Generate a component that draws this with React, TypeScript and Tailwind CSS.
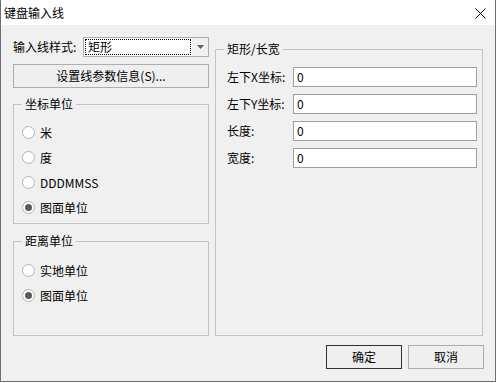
const font = { fontFamily: '"Noto Sans CJK SC", "Noto Sans", sans-serif' }

const coordUnits = [
  { label: '米', checked: false },
  { label: '度', checked: false },
  { label: 'DDDMMSS', checked: false },
  { label: '图面单位', checked: true },
]

const distUnits = [
  { label: '实地单位', checked: false },
  { label: '图面单位', checked: true },
]

const fields = ['左下X坐标:', '左下Y坐标:', '长度:', '宽度:']

function Radio({ label, checked }: { label: string; checked: boolean }) {
  return (
    <div className="flex h-[25px] items-center">
      <span className="flex h-[13px] w-[13px] items-center justify-center rounded-full border border-[#b4b4b4] bg-white">
        {checked && <span className="h-[7px] w-[7px] rounded-full bg-[#5a5a5a]" />}
      </span>
      <span className="ml-[5px] text-[12px] leading-none text-black">{label}</span>
    </div>
  )
}

function Group({
  title,
  className,
  children,
}: {
  title: string
  className: string
  children: React.ReactNode
}) {
  return (
    <div className={`relative border border-[#c4c4c4] ${className}`}>
      {/* legend sits over the top border */}
      <span className="absolute top-[-9px] left-[8px] bg-[#f0f0f0] px-[3px] text-[12px] leading-[16px] text-black">
        {title}
      </span>
      {children}
    </div>
  )
}

export default function App() {
  return (
    <div className="h-[383px] w-[497px] bg-white" style={font}>
      <div className="flex h-[382px] w-[496px] flex-col border-x border-b border-[#6e6e6e]">
        {/* Title bar */}
        <div className="flex h-[25px] shrink-0 items-center justify-between bg-white pl-[3px] pr-[9px]">
          <span className="text-[12px] leading-none text-black">键盘输入线</span>
          <svg width="11" height="11" viewBox="0 0 11 11" className="mt-[1px]">
            <path d="M0.5 0.5 L10.5 10.5 M10.5 0.5 L0.5 10.5" stroke="#000" strokeWidth="1" />
          </svg>
        </div>

        {/* Body */}
        <div className="flex flex-1 flex-col bg-[#f0f0f0] pl-[12px]">
          <div className="flex">
            {/* Left column */}
            <div className="flex w-[196px] flex-col pt-[12px]">
              <div className="flex h-[20px] items-center">
                <span className="w-[70px] text-[12px] leading-none text-black">输入线样式:</span>
                <div className="flex h-[20px] w-[126px] border border-[#adadad] bg-[#f0f0f0]">
                  <div className="flex flex-1 items-center bg-white p-[1px]">
                    <div className="flex h-full w-full items-center border border-dotted border-black pl-[2px] text-[12px] leading-none text-black">
                      矩形
                    </div>
                  </div>
                  <div className="flex w-[16px] items-center justify-center">
                    <svg width="7" height="4" viewBox="0 0 7 4">
                      <path d="M0 0 H7 L3.5 4 Z" fill="#606060" />
                    </svg>
                  </div>
                </div>
              </div>

              <button className="mt-[7px] flex h-[24px] w-[196px] items-center justify-center border border-[#adadad] bg-[#efefef] text-[12px] leading-none text-black">
                设置线参数信息(S)...
              </button>

              <Group title="坐标单位" className="mt-[16px] h-[120px] pt-[15px] pl-[8px]">
                {coordUnits.map((u) => (
                  <Radio key={u.label} label={u.label} checked={u.checked} />
                ))}
              </Group>

              <Group title="距离单位" className="mt-[17px] h-[95px] pt-[16px] pl-[8px]">
                {distUnits.map((u) => (
                  <Radio key={u.label} label={u.label} checked={u.checked} />
                ))}
              </Group>
            </div>

            {/* Right group */}
            <Group title="矩形/长宽" className="mt-[24px] ml-[6px] h-[287px] w-[268px] pt-[17px] pl-[11px]">
              <div className="flex flex-col gap-[7px]">
                {fields.map((f) => (
                  <div key={f} className="flex h-[20px] items-center">
                    <span className="w-[66px] text-[12px] leading-none text-black">{f}</span>
                    <div className="flex h-[20px] w-[184px] items-center border border-[#a0a0a0] bg-white pl-[3px] text-[12px] leading-none text-black">
                      0
                    </div>
                  </div>
                ))}
              </div>
            </Group>
          </div>

          {/* Footer buttons */}
          <div className="mt-[9px] flex justify-end gap-[6px] pr-[11px]">
            <button className="flex h-[24px] w-[76px] items-center justify-center border border-[#333333] bg-[#efefef] text-[12px] leading-none text-black">
              确定
            </button>
            <button className="flex h-[24px] w-[76px] items-center justify-center border border-[#adadad] bg-[#efefef] text-[12px] leading-none text-black">
              取消
            </button>
          </div>
        </div>
      </div>
    </div>
  )
}
